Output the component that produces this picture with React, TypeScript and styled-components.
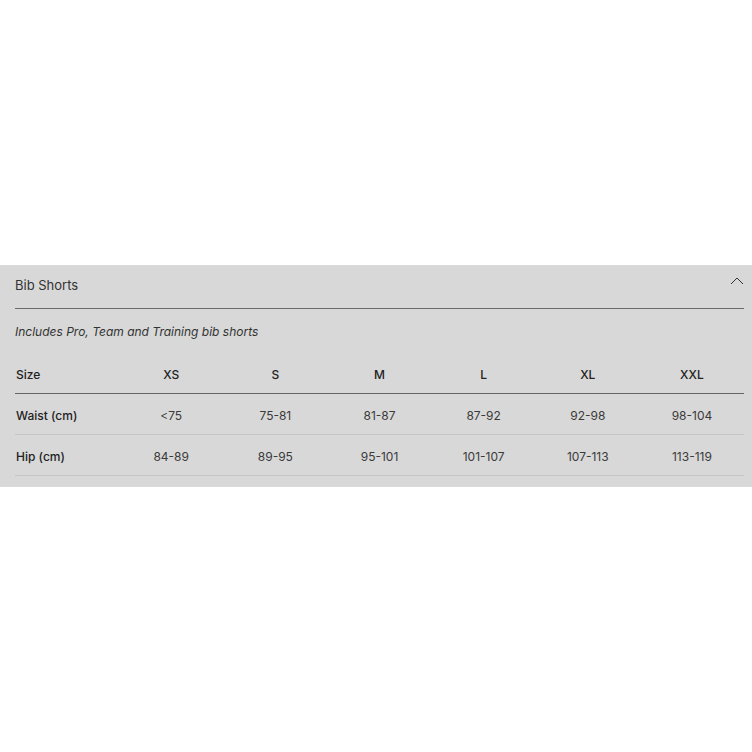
import React from "react";
import styled, { createGlobalStyle } from "styled-components";

const GlobalStyle = createGlobalStyle`
  html, body {
    margin: 0;
    padding: 0;
    background: #ffffff;
  }
  body {
    font-family: Inter, "Noto Sans", "Liberation Sans", sans-serif;
    -webkit-font-smoothing: antialiased;
  }
`;

const sizes = ["XS", "S", "M", "L", "XL", "XXL"];

const rows = [
  { label: "Waist (cm)", values: ["<75", "75-81", "81-87", "87-92", "92-98", "98-104"] },
  { label: "Hip (cm)", values: ["84-89", "89-95", "95-101", "101-107", "107-113", "113-119"] },
];

const App: React.FC = () => {
  return (
    <>
      <GlobalStyle />
      <Page>
        <Panel>
          <Header>
            <Title>Bib Shorts</Title>
            <Chevron width="14" height="8" viewBox="0 0 14 8">
              <polyline points="1,7 7,1 13,7" fill="none" stroke="#333" strokeWidth="1" />
            </Chevron>
          </Header>
          <Note>Includes Pro, Team and Training bib shorts</Note>
          <Table>
            <HeadRow>
              <Cell $label>Size</Cell>
              {sizes.map((s) => (
                <Cell key={s} $head>{s}</Cell>
              ))}
            </HeadRow>
            {rows.map((r) => (
              <BodyRow key={r.label}>
                <Cell $label>{r.label}</Cell>
                {r.values.map((v, i) => (
                  <Cell key={i}>{v}</Cell>
                ))}
              </BodyRow>
            ))}
          </Table>
        </Panel>
      </Page>
    </>
  );
};

export default App;

const Page = styled.div`
  min-height: 100vh;
  display: flex;
  flex-direction: column;
  justify-content: center;
`;

const Panel = styled.section`
  background: #d8d8d8;
  padding: 0 8px 11px 15px;
`;

const Header = styled.div`
  height: 43px;
  display: flex;
  align-items: center;
  justify-content: space-between;
  border-bottom: 1px solid #6b6b6b;
  position: relative;
`;

const Title = styled.h2`
  margin: 0;
  font-size: 13px;
  font-weight: 400;
  color: #333333;
  line-height: 16px;
  margin-top: -3px;
`;

const Chevron = styled.svg`
  position: absolute;
  right: 0;
  top: 12px;
`;

const Note = styled.p`
  margin: 0;
  padding: 15px 0 13px;
  font-size: 12px;
  line-height: 16px;
  font-style: italic;
  color: #333333;
`;

const Table = styled.div`
  display: flex;
  flex-direction: column;
`;

const HeadRow = styled.div`
  display: grid;
  grid-template-columns: repeat(7, 1fr);
  height: 41px;
  padding-top: 3px;
  box-sizing: border-box;
  align-items: center;
  border-bottom: 1px solid #666666;
`;

const BodyRow = styled.div`
  display: grid;
  grid-template-columns: repeat(7, 1fr);
  height: 41px;
  padding-top: 3px;
  box-sizing: border-box;
  align-items: center;
  border-bottom: 1px solid #c6c6c6;
`;

const Cell = styled.div<{ $label?: boolean; $head?: boolean }>`
  font-size: 12px;
  line-height: 16px;
  text-align: ${(p) => (p.$label ? "left" : "center")};
  padding-left: ${(p) => (p.$label ? "1px" : "0")};
  font-weight: ${(p) => (p.$label || p.$head ? 500 : 400)};
  color: ${(p) => (p.$label || p.$head ? "#222222" : "#3a3a3a")};
`;
